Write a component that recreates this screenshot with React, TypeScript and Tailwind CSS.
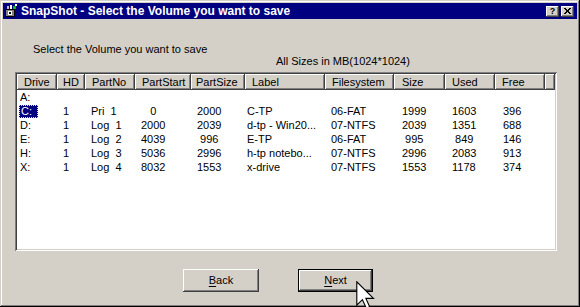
import React from 'react';

type Col = { name: string; w: string; hp: string; dp: string };

const cols: Col[] = [
  { name: 'Drive', w: 'w-[40px]', hp: 'pl-[7px]', dp: 'pl-[3px]' },
  { name: 'HD', w: 'w-[28px]', hp: 'pl-[6px]', dp: 'pl-[6px]' },
  { name: 'PartNo', w: 'w-[50px]', hp: 'pl-[7px]', dp: 'pl-[6px]' },
  { name: 'PartStart', w: 'w-[56px]', hp: 'pl-[7px]', dp: 'pl-[6px]' },
  { name: 'PartSize', w: 'w-[54px]', hp: 'pl-[5px]', dp: 'pl-[6px]' },
  { name: 'Label', w: 'w-[80px]', hp: 'pl-[7px]', dp: 'pl-[2px]' },
  { name: 'Filesystem', w: 'w-[69px]', hp: 'pl-[7px]', dp: 'pl-[6px]' },
  { name: 'Size', w: 'w-[51px]', hp: 'pl-[8px]', dp: 'pl-[8px]' },
  { name: 'Used', w: 'w-[50px]', hp: 'pl-[7px]', dp: 'pl-[7px]' },
  { name: 'Free', w: 'w-[50px]', hp: 'pl-[7px]', dp: 'pl-[8px]' },
];

const rows: string[][] = [
  ['A:'],
  ['C:', '1', 'Pri  1', '   0', '2000', 'C-TP', '06-FAT', '1999', '1603', '396'],
  ['D:', '1', 'Log  1', '2000', '2039', 'd-tp - Win20...', '07-NTFS', '2039', '1351', '688'],
  ['E:', '1', 'Log  2', '4039', ' 996', 'E-TP', '06-FAT', ' 995', ' 849', '146'],
  ['H:', '1', 'Log  3', '5036', '2996', 'h-tp notebo...', '07-NTFS', '2996', '2083', '913'],
  ['X:', '1', 'Log  4', '8032', '1553', 'x-drive', '07-NTFS', '1553', '1178', '374'],
];

const raised =
  'shadow-[inset_-1px_-1px_#404040,inset_1px_1px_#ffffff,inset_-2px_-2px_#808080,inset_2px_2px_#d4d0c8]';

function AppIcon() {
  return (
    <svg width="16" height="14" viewBox="0 0 16 14" shapeRendering="crispEdges">
      <rect x="2" y="5" width="10" height="8" fill="#000" />
      <rect x="3" y="6" width="8" height="6" fill="#808080" />
      <rect x="5" y="7" width="4" height="4" fill="#fff" />
      <rect x="6" y="8" width="2" height="2" fill="#000" />
      <rect x="7" y="1" width="2" height="4" fill="#fff" />
      <rect x="10" y="2" width="3" height="3" fill="#00c000" />
      <rect x="12" y="0" width="2" height="2" fill="#fff" />
      <rect x="4" y="2" width="2" height="3" fill="#c0c0c0" />
    </svg>
  );
}

function CapButton({ children }: { children: React.ReactNode }) {
  return (
    <div className={`w-[13px] h-[11px] bg-[#d4d0c8] ${raised} flex items-center justify-center`}>
      {children}
    </div>
  );
}

function Cursor() {
  return (
    <svg
      className="absolute left-[356px] top-[281px]"
      width="19"
      height="28"
      viewBox="0 0 12.5 18.5"
    >
      <path
        d="M0.5 0.5 L0.5 16 L4.2 12.3 L6.8 18 L9 17 L6.5 11.5 L11.5 11.5 Z"
        fill="#fff"
        stroke="#000"
        strokeWidth="0.75"
        strokeLinejoin="miter"
      />
    </svg>
  );
}

export default function App() {
  return (
    <div className="relative w-[580px] h-[307px] overflow-hidden bg-[#d4d0c8] p-[3px] font-['Liberation_Sans',Arial,sans-serif] text-[11px] text-black shadow-[inset_-1px_-1px_#000000,inset_1px_1px_#d4d0c8,inset_-2px_-2px_#808080,inset_2px_2px_#ffffff]">
      {/* Title bar */}
      <div className="h-[16px] bg-[#000080] flex items-center pr-[3px]">
        <AppIcon />
        <span className="ml-[2px] text-white font-bold text-[12px] leading-none whitespace-nowrap">
          SnapShot - Select the Volume you want to save
        </span>
        <div className="ml-auto flex gap-[2px]">
          <CapButton>
            <span className="text-[9px] font-bold leading-none">?</span>
          </CapButton>
          <CapButton>
            <svg width="7" height="6" viewBox="0 0 7 6" shapeRendering="crispEdges">
              <path d="M0 0h2v1h-2zM5 0h2v1h-2zM1 1h2v1h-2zM4 1h2v1h-2zM2 2h3v2h-3zM1 4h2v1h-2zM4 4h2v1h-2zM0 5h2v1h-2zM5 5h2v1h-2z" fill="#000" />
            </svg>
          </CapButton>
        </div>
      </div>

      {/* Body */}
      <div className="px-[12px] pt-[24px]">
        <div className="h-[13px] leading-[13px] pl-[18px]">Select the Volume you want to save</div>
        <div className="h-[13px] leading-[13px] pl-[261px] -mt-[1px]">All Sizes in MB(1024*1024)</div>

        {/* List view */}
        <div className="mt-[4px] w-[542px] h-[179px] p-[2px] shadow-[inset_1px_1px_#808080,inset_-1px_-1px_#ffffff,inset_2px_2px_#404040,inset_-2px_-2px_#d4d0c8]">
          <div className="bg-white h-full">
            <div className="flex h-[16px]">
              {cols.map((c) => (
                <div
                  key={c.name}
                  className={`${c.w} ${c.hp} h-full bg-[#d4d0c8] ${raised} leading-[16px] whitespace-nowrap`}
                >
                  {c.name}
                </div>
              ))}
              <div className={`flex-1 h-full bg-[#d4d0c8] ${raised}`} />
            </div>
            {rows.map((r, i) => (
              <div key={i} className="flex h-[14px] leading-[14px]">
                {cols.map((c, j) => (
                  <div key={c.name} className={`${c.w} ${j === 0 ? 'pl-[2px]' : c.dp} whitespace-pre`}>
                    {j === 0 && i === 1 ? (
                      <span className="inline-block h-[13px] w-[19px] leading-[11px] pl-[1px] bg-[#000080] text-white border border-dotted border-[#ffff00]">
                        {r[j]}
                      </span>
                    ) : j === 0 ? (
                      <span className="pl-[1px]">{r[j]}</span>
                    ) : (
                      r[j] ?? ''
                    )}
                  </div>
                ))}
              </div>
            ))}
          </div>
        </div>

        {/* Buttons */}
        <div className="mt-[18px] pl-[168px] flex gap-[39px]">
          <button className={`w-[76px] h-[23px] bg-[#d4d0c8] ${raised}`}>
            <span className="underline underline-offset-2">B</span>ack
          </button>
          <button className="w-[75px] h-[23px] bg-[#d4d0c8] border border-black shadow-[inset_-1px_-1px_#404040,inset_1px_1px_#ffffff,inset_-2px_-2px_#808080]">
            <span className="underline underline-offset-2">N</span>ext
          </button>
        </div>
      </div>

      <Cursor />
    </div>
  );
}
